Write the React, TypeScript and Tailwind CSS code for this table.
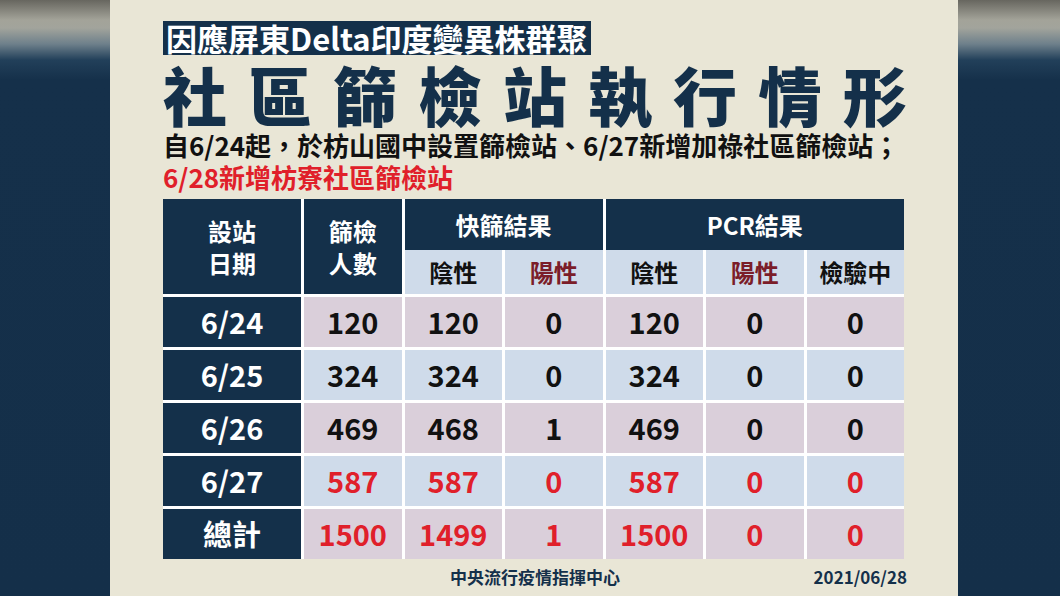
import React from "react";

const NAVY = "bg-[#14304a]";

const rows = [
  { d: "6/24", v: ["120", "120", "0", "120", "0", "0"], bg: "bg-[#dacfda]", red: false },
  { d: "6/25", v: ["324", "324", "0", "324", "0", "0"], bg: "bg-[#cfdbea]", red: false },
  { d: "6/26", v: ["469", "468", "1", "469", "0", "0"], bg: "bg-[#dacfda]", red: false },
  { d: "6/27", v: ["587", "587", "0", "587", "0", "0"], bg: "bg-[#cfdbea]", red: true },
  { d: "總計", v: ["1500", "1499", "1", "1500", "0", "0"], bg: "bg-[#dacfda]", red: true },
];

export default function App() {
  return (
    <div className="flex h-[596px] w-[1060px] overflow-hidden font-['Noto_Sans_CJK_TC','Noto_Sans',sans-serif]">
      <div className="w-[110px] shrink-0 bg-[linear-gradient(to_bottom,#67665f_0px,#a3a399_20px,#a2a49c_28px,#6e808b_44px,#22405a_60px,#15304a_80px,#142f49_100%)]" />
      <div className="w-[848px] shrink-0 bg-[#e9e6d6] pl-[53px] pt-[21px] flex flex-col">
        <div className="flex">
          <div className={`${NAVY} text-white text-[31px] font-bold leading-[34px] h-[34px] px-[3px] whitespace-nowrap`}>
            因應屏東Delta印度變異株群聚
          </div>
        </div>
        <div className="mt-[6px] text-[64px] leading-[64px] font-black tracking-[21px] text-[#14304a] whitespace-nowrap">
          社區篩檢站執行情形
        </div>
        <div className="mt-[4px] text-[26px] leading-[32px] font-bold text-[#111] whitespace-nowrap">
          自6/24起，於枋山國中設置篩檢站、6/27新增加祿社區篩檢站；
        </div>
        <div className="text-[26px] leading-[32px] font-bold text-[#e0202a] whitespace-nowrap">
          6/28新增枋寮社區篩檢站
        </div>
        <div className="mt-[6px] w-[741px] bg-white flex flex-col gap-[3px]">
          <div className="grid grid-cols-[138px_repeat(6,minmax(0,1fr))] grid-rows-[51px_44px] gap-x-[3px] text-[24px] font-bold">
            <div className={`${NAVY} row-span-2 flex flex-col items-center justify-center text-white leading-[32px]`}>
              <span>設站</span>
              <span>日期</span>
            </div>
            <div className={`${NAVY} row-span-2 flex flex-col items-center justify-center text-white leading-[32px]`}>
              <span>篩檢</span>
              <span>人數</span>
            </div>
            <div className={`${NAVY} col-span-2 flex items-center justify-center text-white`}>快篩結果</div>
            <div className={`${NAVY} col-span-3 flex items-center justify-center text-white`}>PCR結果</div>
            <div className="bg-[#cfdbea] flex items-center justify-center text-[#111]">陰性</div>
            <div className="bg-[#cfdbea] flex items-center justify-center text-[#7b1d29]">陽性</div>
            <div className="bg-[#cfdbea] flex items-center justify-center text-[#111]">陰性</div>
            <div className="bg-[#cfdbea] flex items-center justify-center text-[#7b1d29]">陽性</div>
            <div className="bg-[#cfdbea] flex items-center justify-center text-[#111]">檢驗中</div>
          </div>
          <div className="grid grid-cols-[138px_repeat(6,minmax(0,1fr))] auto-rows-[50px] gap-[3px] text-[29px] font-bold">
            {rows.map((r) => (
              <React.Fragment key={r.d}>
                <div className={`${NAVY} flex items-center justify-center text-white`}>{r.d}</div>
                {r.v.map((x, i) => (
                  <div
                    key={i}
                    className={`${r.bg} flex items-center justify-center ${r.red ? "text-[#e0202a]" : "text-[#111]"}`}
                  >
                    {x}
                  </div>
                ))}
              </React.Fragment>
            ))}
          </div>
        </div>
        <div className="w-[744px] grid grid-cols-[1fr_auto_1fr] items-center mt-[8px] text-[17px] font-bold text-[#14304a] leading-[20px]">
          <div />
          <div>中央流行疫情指揮中心</div>
          <div className="justify-self-end">2021/06/28</div>
        </div>
      </div>
      <div className="flex-1 bg-[linear-gradient(to_bottom,#67665f_0px,#a3a399_20px,#a2a49c_28px,#6e808b_44px,#22405a_60px,#15304a_80px,#142f49_100%)]" />
    </div>
  );
}
